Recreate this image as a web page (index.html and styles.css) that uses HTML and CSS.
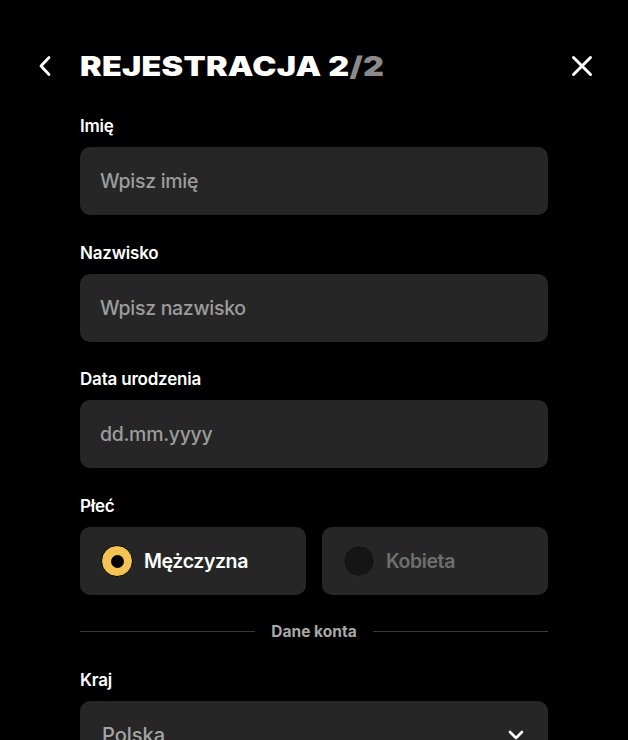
FILE: index.html
```html
<!DOCTYPE html>
<html lang="pl">
<head>
<meta charset="utf-8">
<title>Rejestracja 2/2</title>
<link rel="stylesheet" href="styles.css">
</head>
<body>
<div class="screen">
  <header class="topbar">
    <button class="icon-btn back" aria-label="Wstecz">
      <svg width="14" height="22" viewBox="0 0 14 22"><path d="M11 2.5 L3 11 L11 19.5" fill="none" stroke="#fff" stroke-width="2.8" stroke-linecap="round" stroke-linejoin="round"/></svg>
    </button>
    <h1 class="title"><span>REJESTRACJA 2</span><span class="muted">/2</span></h1>
    <button class="icon-btn close" aria-label="Zamknij">
      <svg width="22" height="22" viewBox="0 0 22 22"><path d="M2.5 2.5 L19.5 19.5 M19.5 2.5 L2.5 19.5" fill="none" stroke="#fff" stroke-width="3" stroke-linecap="round"/></svg>
    </button>
  </header>

  <form class="form">
    <div class="field">
      <label class="label">Imię</label>
      <div class="input"><span class="placeholder">Wpisz imię</span></div>
    </div>
    <div class="field">
      <label class="label">Nazwisko</label>
      <div class="input"><span class="placeholder">Wpisz nazwisko</span></div>
    </div>
    <div class="field">
      <label class="label">Data urodzenia</label>
      <div class="input"><span class="placeholder">dd.mm.yyyy</span></div>
    </div>
    <div class="field">
      <label class="label">Płeć</label>
      <div class="radios">
        <div class="radio checked"><span class="dot"></span><span class="radio-text">Mężczyzna</span></div>
        <div class="radio"><span class="dot"></span><span class="radio-text">Kobieta</span></div>
      </div>
    </div>
    <div class="divider"><span class="line"></span><span class="divider-text">Dane konta</span><span class="line"></span></div>
    <div class="field">
      <label class="label">Kraj</label>
      <div class="input select"><span class="value">Polska</span>
        <svg class="chev" width="16" height="10" viewBox="0 0 16 10"><path d="M2 2 L8 8 L14 2" fill="none" stroke="#fff" stroke-width="2.6" stroke-linecap="round" stroke-linejoin="round"/></svg>
      </div>
    </div>
  </form>
</div>
</body>
</html>
```
FILE: styles.css
```css
* { box-sizing: border-box; }
html, body { margin: 0; padding: 0; background: #000; }
body { font-family: "Inter", "Noto Sans", sans-serif; color: #fff; overflow: hidden; height: 740px; }
.screen { width: 628px; height: 740px; overflow: hidden; }
.topbar { display: flex; align-items: center; height: 66px; margin-top: 33px; padding: 0 24px 0 36px; }
.icon-btn { background: none; border: 0; padding: 0; display: flex; align-items: center; justify-content: center; cursor: pointer; }
.back { width: 18px; height: 24px; margin-right: 26px; }
.title { margin: 0; font-family: "Inter", sans-serif; font-weight: 900; font-size: 27px; letter-spacing: 0.2px; line-height: 1; transform: scaleX(1.2); transform-origin: left center; white-space: nowrap; flex: 1; }
.title .muted { color: #8a8a8a; }
.close { width: 24px; height: 24px; margin-right: 10px; }
.form { width: 468px; margin: 16px 0 0 80px; display: flex; flex-direction: column; gap: 26.7px; }
.field { display: flex; flex-direction: column; gap: 10px; }
.label { font-size: 17px; font-weight: 600; line-height: 22px; letter-spacing: -0.2px; }
.input { height: 68px; background: #262626; border-radius: 10px; display: flex; align-items: center; padding: 0 20px; }
.placeholder { color: #9c9c9c; font-size: 19.5px; font-weight: 500; letter-spacing: -0.3px; }
.radios { display: grid; grid-template-columns: 1fr 1fr; gap: 16px; }
.radio { height: 68px; background: #262626; border-radius: 10px; display: flex; align-items: center; padding: 0 21px; gap: 11px; }
.dot { width: 32px; height: 32px; border-radius: 50%; background: #151515; border: 1px solid #2e2e2e; display: flex; align-items: center; justify-content: center; }
.radio.checked .dot { background: #f3c453; border: 1px solid #000; }
.radio.checked .dot::after { content: ""; width: 13px; height: 13px; border-radius: 50%; background: #000; }
.radio-text { font-size: 19.5px; font-weight: 600; color: #6e6e6e; letter-spacing: -0.4px; }
.radio.checked .radio-text { color: #fff; }
.divider { display: flex; align-items: center; gap: 16px; height: 18px; margin: 1px 0 2px; }
.line { flex: 1; height: 1px; background: #3a3a3a; }
.divider-text { font-size: 15.5px; font-weight: 700; color: #a8a8a8; }
.select { justify-content: space-between; padding: 0 22px; }
.value { color: #a5a5a5; font-size: 20px; font-weight: 500; }
.chev { margin-right: 2px; }
```
